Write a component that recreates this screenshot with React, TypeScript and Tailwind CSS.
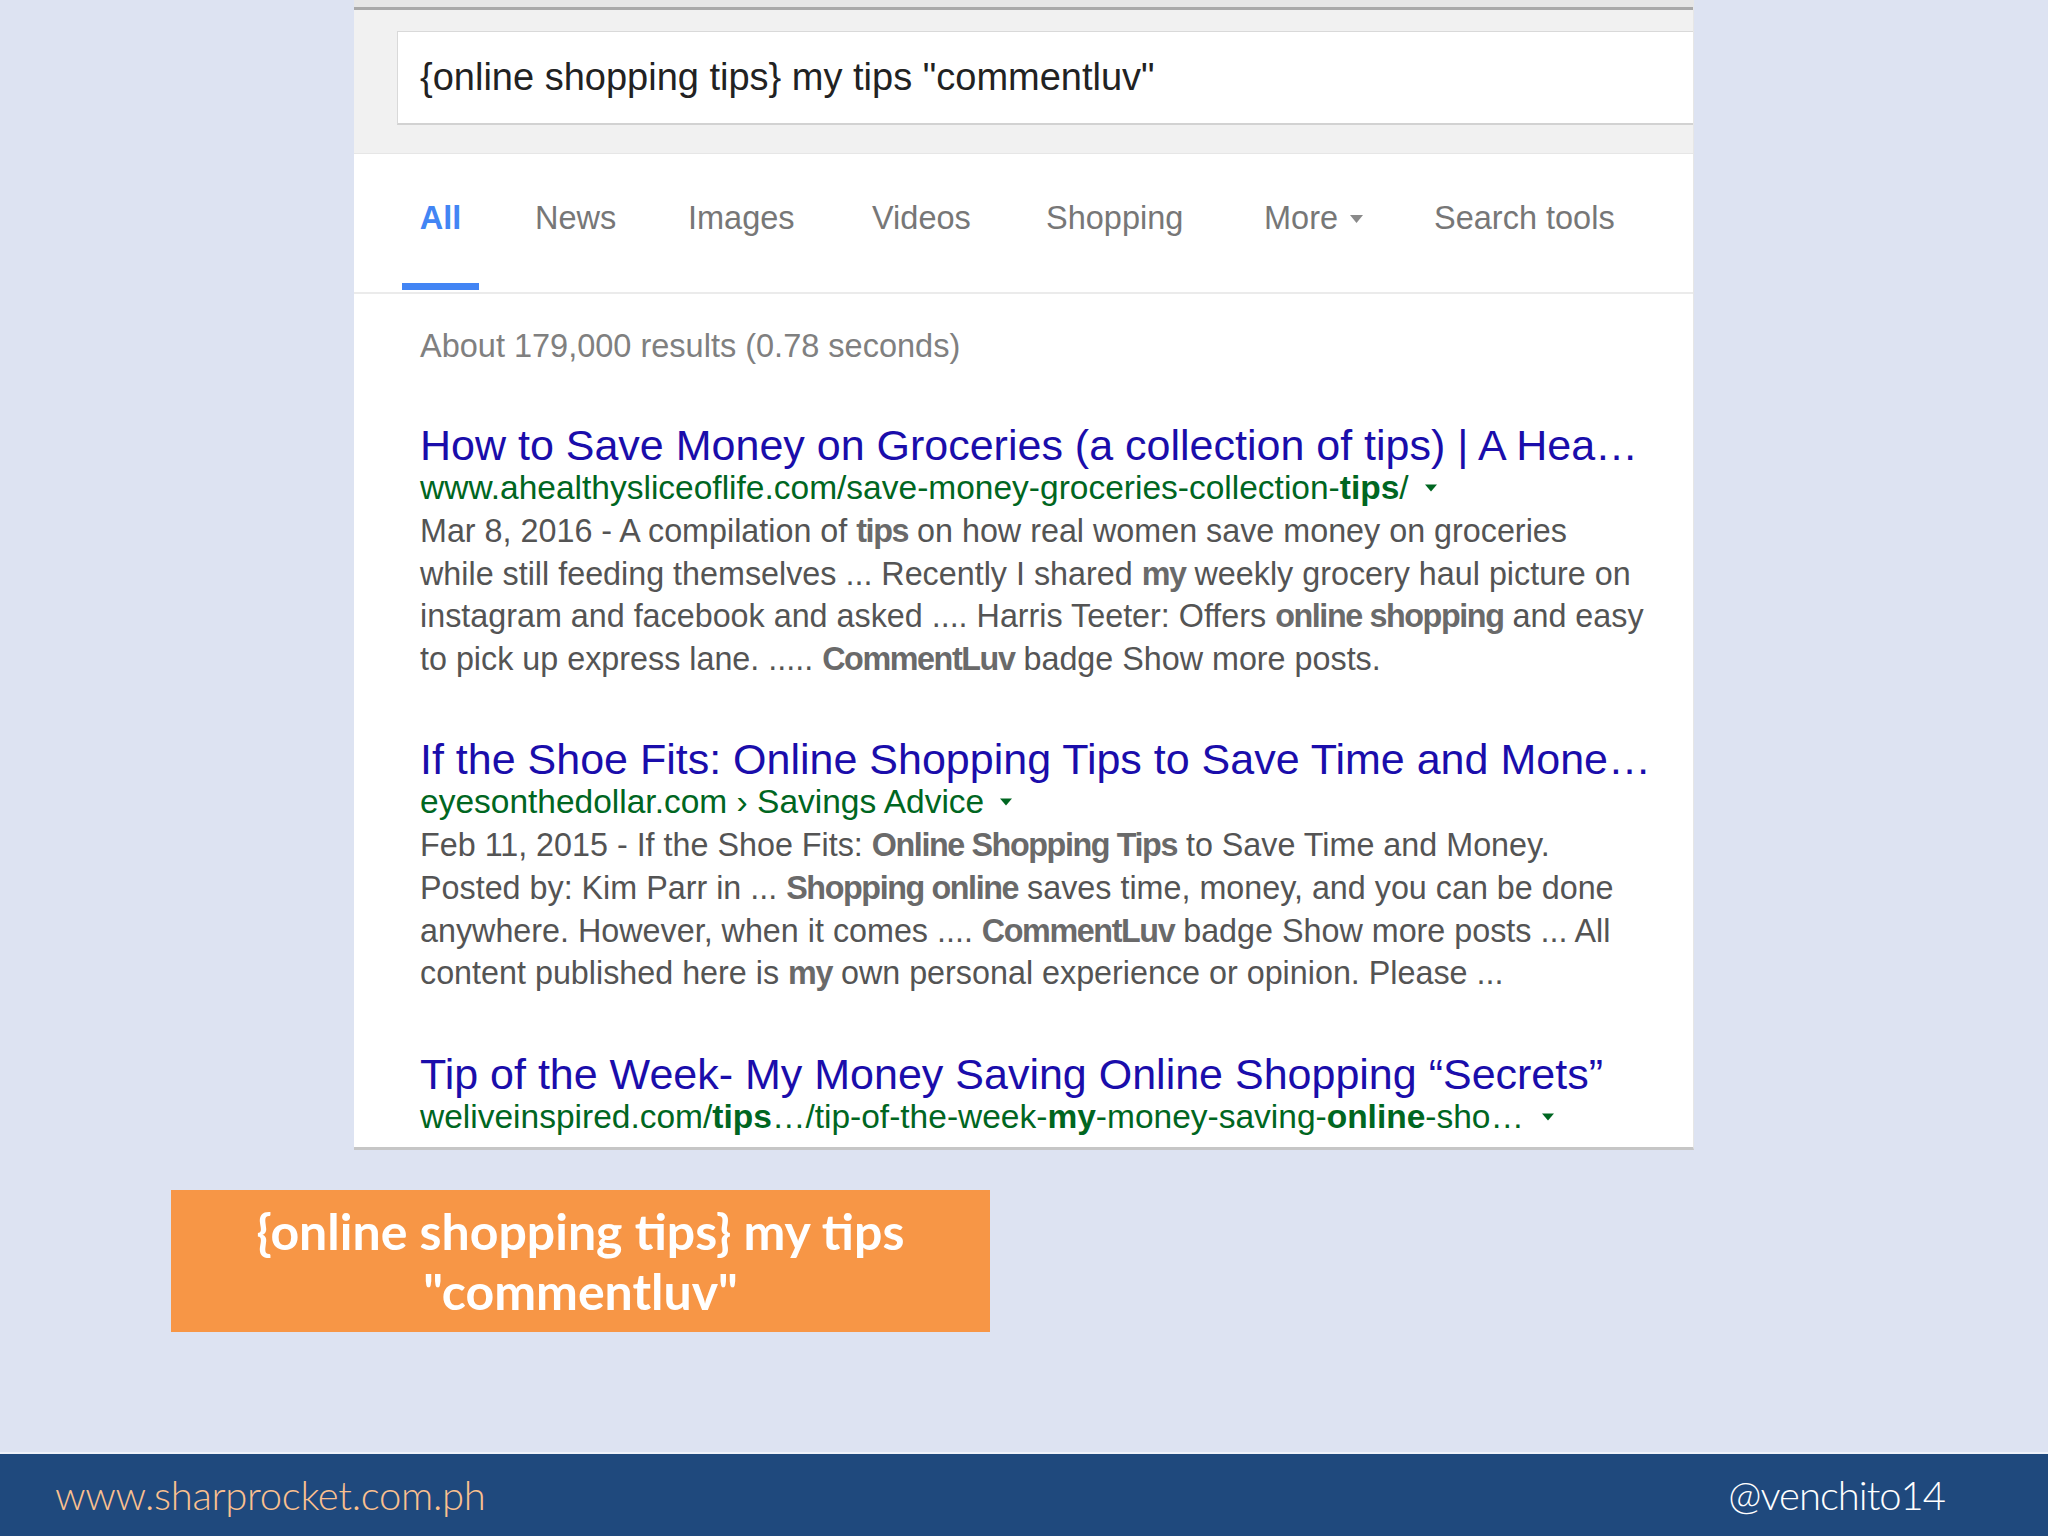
import type { ReactNode } from 'react'

const tabs = [
  { label: 'News', w: 'w-[153px]' },
  { label: 'Images', w: 'w-[184px]' },
  { label: 'Videos', w: 'w-[174px]' },
  { label: 'Shopping', w: 'w-[218px]' },
]

function Caret({ className }: { className: string }) {
  return (
    <svg viewBox="0 0 10 6" className={className} fill="currentColor">
      <path d="M0 0h10L5 6z" />
    </svg>
  )
}

function Result({ title, url, lines }: { title: string; url: ReactNode; lines: ReactNode[] }) {
  return (
    <div className="mb-[56px]">
      <div className="text-[43px] leading-[46px] text-[#1a0dab] whitespace-nowrap">{title}</div>
      <div className="flex items-center text-[33.5px] leading-[40px] text-[#006621] whitespace-nowrap">
        {url}
        <Caret className="ml-[16px] w-[12px] h-[8px] text-[#006621]" />
      </div>
      <div className="mt-[2px] text-[32.3px] leading-[42.6px] text-[#545454]">
        {lines.map((l, i) => (
          <div key={i} className="whitespace-nowrap">
            {l}
          </div>
        ))}
      </div>
    </div>
  )
}

function B({ children }: { children: ReactNode }) {
  return <b className="font-bold text-[#6a6a6a] tracking-[-1.4px]">{children}</b>
}

function GoogleShot() {
  return (
    <div className="shrink-0 ml-[354px] w-[1340px] h-[1150px] bg-white overflow-hidden font-['Liberation_Sans',Arial,sans-serif] border-b-[3px] border-[#c6c6c6] border-r border-r-[#e6e6e6]">
      <div className="h-[7px] bg-[#e6e6e6]" />
      <div className="h-[3px] bg-[#a9a9a9]" />
      <div className="h-[143px] bg-[#f1f1f1] pt-[21px] pl-[43px]">
        <div className="h-[94px] w-[1400px] bg-white border border-[#d9d9d9] border-b-2 border-b-[#d2d2d2] flex items-center pl-[22px] text-[38px] text-[#222] whitespace-nowrap">
          {'{online shopping tips} my tips "commentluv"'}
        </div>
      </div>
      <div className="h-[141px] border-t border-[#e6e6e6] border-b-2 border-b-[#ebebeb] flex pl-[48px] text-[32.5px] text-[#777]">
        <div className="w-[77px] flex flex-col">
          <div className="h-[129px] flex items-center justify-center font-bold text-[#4285f4]">All</div>
          <div className="h-[7px] bg-[#4285f4]" />
        </div>
        <div className="w-[56px]" />
        {tabs.map((t) => (
          <div key={t.label} className={`${t.w} h-[129px] flex items-center`}>
            {t.label}
          </div>
        ))}
        <div className="w-[170px] h-[129px] flex items-center">
          More
          <Caret className="ml-[12px] w-[13px] h-[8px] text-[#8a8a8a]" />
        </div>
        <div className="h-[129px] flex items-center">Search tools</div>
      </div>
      <div className="pl-[66px] pt-[32px]">
        <div className="text-[32.5px] leading-[40px] text-[#808080] mb-[56px]">About 179,000 results (0.78 seconds)</div>
        <Result
          title="How to Save Money on Groceries (a collection of tips) | A Hea…"
          url={
            <span>
              www.ahealthysliceoflife.com/save-money-groceries-collection-<b>tips</b>/
            </span>
          }
          lines={[
            <>
              Mar 8, 2016 - A compilation of <B>tips</B> on how real women save money on groceries
            </>,
            <>
              while still feeding themselves ... Recently I shared <B>my</B> weekly grocery haul picture on
            </>,
            <>
              instagram and facebook and asked .... Harris Teeter: Offers <B>online shopping</B> and easy
            </>,
            <>
              to pick up express lane. ..... <B>CommentLuv</B> badge Show more posts.
            </>,
          ]}
        />
        <Result
          title="If the Shoe Fits: Online Shopping Tips to Save Time and Mone…"
          url={<span>eyesonthedollar.com › Savings Advice</span>}
          lines={[
            <>
              Feb 11, 2015 - If the Shoe Fits: <B>Online Shopping Tips</B> to Save Time and Money.
            </>,
            <>
              Posted by: Kim Parr in ... <B>Shopping online</B> saves time, money, and you can be done
            </>,
            <>
              anywhere. However, when it comes .... <B>CommentLuv</B> badge Show more posts ... All
            </>,
            <>
              content published here is <B>my</B> own personal experience or opinion. Please ...
            </>,
          ]}
        />
        <Result
          title="Tip of the Week- My Money Saving Online Shopping “Secrets”"
          url={
            <span>
              weliveinspired.com/<b>tips</b>…/tip-of-the-week-<b>my</b>-money-saving-<b>online</b>-sho
              <span className="tracking-[2px]">…</span>
            </span>
          }
          lines={[]}
        />
      </div>
    </div>
  )
}

export default function App() {
  return (
    <div className="w-[2048px] h-[1536px] bg-[#dde3f2] flex flex-col overflow-hidden">
      <GoogleShot />
      <div className="shrink-0 mt-[40px] ml-[171px] w-[819px] h-[142px] bg-[#f79646] flex flex-col items-center justify-center text-white font-['Lato',sans-serif] font-bold text-[50px] leading-[60px]">
        <div>{'{online shopping tips} my tips'}</div>
        <div>"commentluv"</div>
      </div>
      <div className="flex-1" />
      <div className="shrink-0 h-[84px] border-t-2 border-[#eef2fa] bg-[#1f497d] flex items-center justify-between pl-[55px] pr-[103px] font-['Lato',sans-serif] font-light text-[40px]">
        <span className="text-[#fac08f] tracking-[-0.3px]">www.sharprocket.com.ph</span>
        <span className="text-white tracking-[-1px]">@venchito14</span>
      </div>
    </div>
  )
}
